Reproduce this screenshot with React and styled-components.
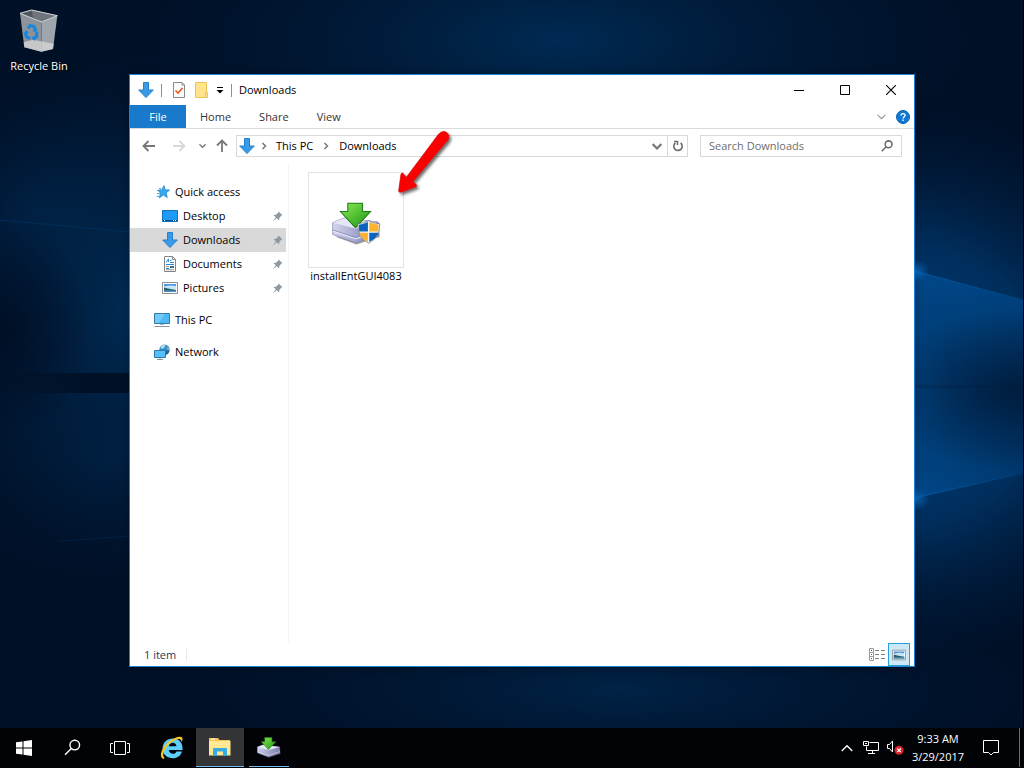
import React from 'react';
import styled, { createGlobalStyle } from 'styled-components';

const GlobalStyle = createGlobalStyle`
  *, *::before, *::after {
    box-sizing: border-box;
  }

  body {
    margin: 0;
    background: #000c1f;
    color: #000;
    font: 11px/16px 'Open Sans', 'Noto Sans', sans-serif;
  }

  button, input {
    margin: 0;
    padding: 0;
    border: 0;
    background: none;
    color: inherit;
    font: inherit;
  }

  a {
    color: inherit;
    text-decoration: none;
  }

  svg {
    display: block;
    flex: none;
  }
`;

const Screen = styled.div`
  display: flex;
  flex-direction: column;
  min-height: 100vh;
  position: relative;
  overflow: hidden;
`;

const WallpaperSvg = styled.svg`
  position: absolute;
  width: 100%;
  height: 100%;
`;

const Desktop = styled.main`
  flex: 1;
  position: relative;
`;

const DesktopShortcut = styled.button`
  display: flex;
  flex-direction: column;
  align-items: center;
  gap: 5px;
  width: 78px;
  padding-top: 9px;
  color: #fff;
  text-shadow: 1px 1px 2px #000;
  position: relative;
`;

const Window = styled.section`
  display: flex;
  flex-direction: column;
  position: absolute;
  inset: 74px 109px 61px 129px;
  background: #fff;
  border: 1px solid #1883d7;
  box-shadow: 0 1px 8px rgba(0, 0, 0, 0.3);
`;

const TitleBar = styled.header`
  display: flex;
  align-items: center;
  height: 30px;
  padding-left: 8px;
`;

const QuickTools = styled.div`
  display: flex;
  align-items: center;
  gap: 7px;
`;

const Divider = styled.span`
  width: 1px;
  height: ${(props) => (props.$faint ? '12px' : '13px')};
  background: ${(props) => (props.$faint ? '#e9e9e9' : '#8e8e8e')};
`;

const IconButton = styled.button`
  display: flex;
  align-items: center;
  justify-content: center;
  width: ${(props) => props.$width || 16}px;
  height: ${(props) => props.$height || 20}px;
`;

const WindowTitle = styled.h1`
  flex: 1;
  margin: 0;
  padding-left: 7px;
  font-size: 11px;
  font-weight: 400;
`;

const WindowControls = styled.div`
  display: flex;
`;

const Ribbon = styled.nav`
  display: flex;
  align-items: center;
  height: 24px;
  border-bottom: 1px solid #dadbdc;
`;

const RibbonTab = styled.button`
  height: 23px;
  padding: 0 14px;
  color: #333;
`;

const FileTab = styled(RibbonTab)`
  width: 56px;
  background: #1979ca;
  color: #fff;
`;

const Spacer = styled.div`
  flex: 1;
`;

const NavigationBar = styled.div`
  display: flex;
  align-items: center;
  height: 35px;
  padding: 0 12px 2px 7px;
`;

const HistoryButtons = styled.div`
  display: flex;
  align-items: center;
  width: 99px;
`;

const AddressBar = styled.div`
  display: flex;
  flex: 1;
  align-items: center;
  height: 22px;
  border: 1px solid #d9d9d9;
`;

const Crumb = styled.button`
  height: 20px;
  padding: 0 5px;
  line-height: 18px;
`;

const RefreshButton = styled(IconButton)`
  border-left: 1px solid #d9d9d9;
`;

const SearchBox = styled.label`
  display: flex;
  align-items: center;
  width: 202px;
  height: 22px;
  margin-left: 12px;
  padding: 0 8px;
  border: 1px solid #d9d9d9;
`;

const SearchInput = styled.input`
  flex: 1;
  min-width: 0;
  outline: 0;

  &::placeholder {
    color: #6d6d6d;
    opacity: 1;
  }
`;

const WindowBody = styled.div`
  display: flex;
  flex: 1;
  min-height: 0;
`;

const Sidebar = styled.nav`
  display: flex;
  flex-direction: column;
  width: 159px;
  padding: 16px 2px 0 0;
  border-right: 1px solid #f3f3f3;
`;

const SidebarLink = styled.a`
  display: flex;
  align-items: center;
  gap: 5px;
  height: 24px;
  padding: 0 3px 0 ${(props) => (props.$nested ? 32 : 24)}px;
  background: ${(props) => (props.$selected ? '#d9d9d9' : 'transparent')};
`;

const SidebarLabel = styled.span`
  flex: 1;
`;

const SidebarGroup = styled.div`
  margin-bottom: 8px;
`;

const FileArea = styled.div`
  flex: 1;
  padding: 8px 19px;
`;

const FileTile = styled.button`
  display: flex;
  flex-direction: column;
  align-items: center;
  width: 96px;
`;

const Thumbnail = styled.span`
  display: flex;
  align-items: center;
  justify-content: center;
  width: 96px;
  height: 96px;
  padding-top: 7px;
  border: 1px solid #e2e2e2;
`;

const StatusBar = styled.footer`
  display: flex;
  align-items: center;
  gap: 10px;
  height: 23px;
  padding: 0 4px 0 14px;
  color: #1e395b;
`;

const ViewButtons = styled.div`
  display: flex;
  margin-left: auto;
`;

const ActiveViewButton = styled(IconButton)`
  background: #cce8f6;
  border: 1px solid #26a0da;
`;

const PointerArrow = styled.svg`
  position: absolute;
  left: 267px;
  top: 53px;
`;

const Taskbar = styled.footer`
  display: flex;
  height: 40px;
  padding-bottom: 1px;
  background: #020307;
  color: #fff;
  position: relative;
`;

const TaskButton = styled.button`
  display: flex;
  align-items: center;
  justify-content: center;
  width: 48px;
`;

const AppButton = styled(TaskButton)`
  width: ${(props) => (props.$active ? 48 : 40)}px;
  margin-left: ${(props) => (props.$active ? 0 : 5)}px;
  background: ${(props) => (props.$active ? '#333537' : 'transparent')};
  border-bottom: 1px solid #76b9ed;
`;

const AppButtons = styled.div`
  display: flex;
  margin-left: 4px;
`;

const Tray = styled.div`
  display: flex;
  align-items: center;
  margin-left: auto;
`;

const Clock = styled.button`
  width: 62px;
  line-height: 18px;
  text-align: center;
`;

const ShowDesktop = styled.button`
  width: 5px;
  height: 39px;
  margin-left: 6px;
  border-left: 1px solid #6a6b6d;
`;

const Wallpaper = () => (
  <WallpaperSvg viewBox="0 0 1024 768" preserveAspectRatio="none" aria-hidden="true">
    <defs>
      <radialGradient id="rightGlow">
        <stop offset="0" stopColor="#0055a0" />
        <stop offset="0.5" stopColor="#004280" stopOpacity="0.8" />
        <stop offset="1" stopColor="#00234a" stopOpacity="0" />
      </radialGradient>
      <radialGradient id="softGlow">
        <stop offset="0" stopColor="#003362" stopOpacity="0.9" />
        <stop offset="1" stopColor="#001f40" stopOpacity="0" />
      </radialGradient>
      <radialGradient id="shade">
        <stop offset="0" stopColor="#000d22" stopOpacity="0.8" />
        <stop offset="1" stopColor="#000d22" stopOpacity="0" />
      </radialGradient>
      <radialGradient id="flare">
        <stop offset="0" stopColor="#1080e0" stopOpacity="0.8" />
        <stop offset="1" stopColor="#0060b0" stopOpacity="0" />
      </radialGradient>
      <linearGradient id="beam" x1="914" x2="1024" y1="0" y2="0" gradientUnits="userSpaceOnUse">
        <stop offset="0" stopColor="#0870c8" stopOpacity="0.6" />
        <stop offset="1" stopColor="#005a9e" stopOpacity="0.2" />
      </linearGradient>
      <linearGradient id="upperFill" x1="0.1" y1="0" x2="0" y2="1">
        <stop offset="0.1" stopColor="#005cac" stopOpacity="0.45" />
        <stop offset="1" stopColor="#00498a" stopOpacity="0" />
      </linearGradient>
      <linearGradient id="lowerFill" x1="0" y1="1" x2="0.3" y2="0">
        <stop offset="0.1" stopColor="#005cac" stopOpacity="0.45" />
        <stop offset="1" stopColor="#00498a" stopOpacity="0" />
      </linearGradient>
      <linearGradient id="band" x1="0" x2="1">
        <stop offset="0" stopColor="#000d20" stopOpacity="0" />
        <stop offset="0.5" stopColor="#000d20" stopOpacity="0.85" />
      </linearGradient>
    </defs>
    <rect width="1024" height="768" fill="#001027" />
    <ellipse cx="560" cy="40" rx="420" ry="160" fill="url(#softGlow)" opacity="0.85" />
    <ellipse cx="150" cy="310" rx="230" ry="260" fill="url(#softGlow)" />
    <ellipse cx="40" cy="210" rx="170" ry="140" fill="url(#softGlow)" opacity="0.4" />
    <ellipse cx="110" cy="460" rx="190" ry="130" fill="url(#softGlow)" opacity="0.3" />
    <ellipse cx="620" cy="690" rx="420" ry="100" fill="url(#softGlow)" opacity="0.6" />
    <ellipse cx="0" cy="330" rx="90" ry="110" fill="url(#shade)" />
    <ellipse cx="900" cy="385" rx="290" ry="280" fill="url(#rightGlow)" opacity="0.75" />
    <path d="M914 271 L1024 300 V386 H914 Z" fill="url(#upperFill)" />
    <path d="M914 498 L1024 473 V386 H914 Z" fill="url(#lowerFill)" />
    <path d="M914 271 L1024 300 M914 498 L1024 473" stroke="url(#beam)" />
    <ellipse cx="914" cy="271" rx="16" ry="12" fill="url(#flare)" />
    <ellipse cx="914" cy="499" rx="16" ry="12" fill="url(#flare)" />
    <ellipse cx="1010" cy="390" rx="130" ry="80" fill="url(#shade)" opacity="0.7" />
    <path d="M0 220 L130 232" stroke="#003b70" opacity="0.5" />
    <path d="M60 541 L130 536" stroke="#003260" opacity="0.4" />
    <path d="M914 385 H1024 V388 H914 Z" fill="#001c3c" opacity="0.25" />
    <path d="M0 373 H180 V393 H0 Z" fill="url(#band)" />
    <path d="M1023 0 H1024 V768 H1023 Z" fill="#000" />
  </WallpaperSvg>
);

const RecycleBinIcon = () => (
  <svg width="40" height="44" viewBox="58 28 120 132">
    <path d="M61 41 L126 67 L125 156 L74 143 Z" fill="#8c939b" />
    <path d="M126 67 L173 48 L160 148 L125 156 Z" fill="#9fa5ad" />
    <path d="M61 41 L96 31 L173 48 L126 67 Z" fill="#50565f" />
    <path d="M96 31 L100 54 L126 67 L173 48 Z" fill="#6f757d" />
    <path d="M72 128 L100 120 L162 132 L160 148 L125 156 L74 143 Z" fill="#d3d4d4" opacity="0.8" />
    <path d="M61 41 L96 31 L173 48 L126 67 Z" fill="none" stroke="#d5d8dc" strokeWidth="3" />
    <path
      d="M85 86 L91 78 L102 80 L107 90 M111 96 L111 112 L101 118 M91 117 L80 111 L77 98"
      fill="none"
      stroke="#1686df"
      strokeWidth="9"
    />
    <path d="M112 84 L110 99 L98 93 Z M105 107 L95 115 L104 125 Z M73 101 L80 90 L88 101 Z" fill="#1686df" />
  </svg>
);

const DownArrowIcon = () => (
  <svg width="16" height="16" viewBox="0 0 16 16">
    <path d="M5.5 0.5 H10.5 V8 H15.3 L8 15.6 L0.7 8 H5.5 Z" fill="#3a9ae8" stroke="#2581cb" />
  </svg>
);

const PropertiesIcon = () => (
  <svg width="16" height="16" viewBox="0 0 16 16">
    <path d="M2.5 0.5 H11 L13.5 3 V15.5 H2.5 Z" fill="#fafafa" stroke="#8a8a8a" />
    <path d="M11 0.5 V3 H13.5" fill="none" stroke="#8a8a8a" />
    <path d="M4.5 8.5 L7 11 L11.5 6" fill="none" stroke="#eb5a1e" strokeWidth="1.6" />
  </svg>
);

const FolderIcon = () => (
  <svg width="16" height="16" viewBox="0 0 16 16">
    <path d="M1.5 0.5 H12.5 V10 H13.5 V15.5 H1.5 Z" fill="#ffe48d" stroke="#eac55a" />
    <path d="M11.5 10 V15" stroke="#eac55a" />
  </svg>
);

const CustomizeIcon = () => (
  <svg width="8" height="8" viewBox="0 0 8 8">
    <path d="M1 1.5 H7" stroke="#000" />
    <path d="M0.5 4 H7.5 L4 7.5 Z" fill="#000" />
  </svg>
);

const Chevron = ({ direction = 'down', color = '#777', size = 8, weight = 1.5 }) => {
  const paths = {
    down: 'M0.5 2.5 L4 6 L7.5 2.5',
    right: 'M2.5 1 L5.5 4 L2.5 7',
    up: 'M0.5 6 L4 2.5 L7.5 6',
  };
  return (
    <svg width={size} height={size} viewBox="0 0 8 8">
      <path d={paths[direction]} fill="none" stroke={color} strokeWidth={weight} />
    </svg>
  );
};

const HistoryArrow = ({ angle = 0, color = '#777' }) => (
  <svg width="14" height="14" viewBox="0 0 14 14">
    <path
      d="M1.5 7 H13 M6.5 2 L1.5 7 L6.5 12"
      fill="none"
      stroke={color}
      strokeWidth="1.8"
      transform={`rotate(${angle} 7 7)`}
    />
  </svg>
);

const HelpIcon = () => (
  <svg width="14" height="14" viewBox="0 0 14 14">
    <circle cx="7" cy="7" r="6.5" fill="#0e78d4" stroke="#0864b4" />
    <path
      d="M5 5.4 C5 3 9.1 3 9.1 5.3 C9.1 6.8 7.1 6.8 7.1 8.6 M7.1 9.6 V11"
      fill="none"
      stroke="#fff"
      strokeWidth="1.4"
    />
  </svg>
);

const RefreshIcon = () => (
  <svg width="12" height="12" viewBox="0 0 12 12">
    <path d="M3.4 3 A4.2 4.2 0 1 0 8.6 3" fill="none" stroke="#6d6d6d" strokeWidth="1.6" />
    <path d="M2 1.5 H5.5 V5" fill="none" stroke="#6d6d6d" strokeWidth="1.5" />
  </svg>
);

const SearchIcon = ({ size = 12, color = '#6d6d6d', weight = 1.6 }) => (
  <svg width={size} height={size} viewBox="0 0 12 12">
    <circle cx="7.6" cy="4.3" r="3.4" fill="none" stroke={color} strokeWidth={weight} />
    <path d="M5.2 6.7 L0.7 11.2" stroke={color} strokeWidth={weight} />
  </svg>
);

const PinIcon = () => (
  <svg width="11" height="11" viewBox="0 0 11 11">
    <path
      d="M6.5 0.5 L10.5 4.2 L9.2 4.8 L7.3 7 L7.2 9.4 L4.7 7.2 L0.5 10.8 L3.8 6.3 L1.4 4 L4 3.8 L6.2 1.8 Z"
      fill="#8e9aa3"
    />
  </svg>
);

const StarIcon = () => (
  <svg width="16" height="16" viewBox="0 0 16 16">
    <path
      d="M10 1.5 L11.2 5.8 L15.6 6 L12.2 8.9 L13.3 13.6 L9.4 11 L5.2 14 L6.5 9.1 L3.8 6.2 L7.8 5.8 Z"
      fill="#34a9ee"
      stroke="#1a80c8"
      strokeWidth="0.7"
    />
    <path d="M5 4.5 H7 M3 6.5 H4 M3 9.5 H6 M2.6 12.3 H5" stroke="#4db1ec" />
  </svg>
);

const DesktopIcon = () => (
  <svg width="16" height="16" viewBox="0 0 16 16">
    <path d="M0.5 2.5 H15.5 V13.5 H0.5 Z" fill="#1e9cf5" stroke="#0f72bd" />
    <path d="M1 12.5 H15" stroke="#084f8c" />
    <path d="M2 12.5 H3 M11 12.5 H12 M13 12.5 H14" stroke="#fff" />
  </svg>
);

const DocumentIcon = () => (
  <svg width="16" height="16" viewBox="0 0 16 16">
    <path d="M2.5 0.5 H10.5 L13.5 3.5 V15.5 H2.5 Z" fill="#fff" stroke="#858585" />
    <path d="M10.5 0.5 V3.5 H13.5" fill="none" stroke="#858585" />
    <path d="M4 6.5 L6.5 2.8 V6 M8 4.5 H9.5 M4 8.5 H12 M8 6.5 H12 M4 12.5 H7" fill="none" stroke="#2a8bd4" />
    <path d="M4 10.5 H7 M4 13.8 H12" stroke="#777" strokeWidth="0.8" />
    <path d="M8 10 H12 V12 H8 Z" fill="#3c7188" />
  </svg>
);

const PictureIcon = ({ size = 16 }) => (
  <svg width={size} height={size} viewBox="0 0 16 16">
    <path d="M0.5 2.5 H15.5 V13.5 H0.5 Z" fill="#fff" stroke="#8f8f8f" />
    <path d="M2 4 H14 V12 H2 Z" fill="#c8e6f6" />
    <path d="M2 4 H14 V6 L8 5.5 L2 6.5 Z" fill="#5397df" />
    <path d="M2 7.5 L6 8.5 L14 10 V12 H2 Z" fill="#2c5f66" />
    <path d="M2 10.5 L14 10.5 V12 H2 Z" fill="#4b93c8" />
  </svg>
);

const ComputerIcon = () => (
  <svg width="16" height="16" viewBox="0 0 16 16">
    <path d="M0.5 1.5 H15.5 V11.5 H0.5 Z" fill="#4cb8f4" stroke="#347ba6" />
    <path d="M1 2 H11 L5 11 H1 Z" fill="#8bd5fa" opacity="0.6" />
    <path d="M6 12.5 H10" stroke="#a6b5be" />
    <path d="M0.5 14.5 H15.5" stroke="#8498a5" />
  </svg>
);

const NetworkIcon = () => (
  <svg width="16" height="16" viewBox="0 0 16 16">
    <circle cx="10.5" cy="5.6" r="5.2" fill="#3a8fc4" />
    <path d="M6.6 2.5 Q9 0.6 11.5 1.2 L10 4 L7.5 5 Z M13 3 L15 5 L14 6 Z" fill="#b4dcf0" />
    <path d="M12 6.5 H15.5 Q15 10 12 10.7 Z" fill="#24648f" />
    <path d="M0.5 6.5 H11.5 V13.5 H0.5 Z" fill="#56c0fa" stroke="#2b78ad" />
    <path d="M3 15.5 H9 M6 14 V15" stroke="#8798a3" />
  </svg>
);

const DetailsIcon = () => (
  <svg width="16" height="14" viewBox="0 0 16 14">
    <path d="M0.5 0.5 H4.5 V12.5 H0.5 Z M0.5 4.5 H4.5 M0.5 8.5 H4.5" fill="#fff" stroke="#9a9a9a" />
    <path d="M2 2.5 H3 M2 6.5 H3 M2 10.5 H3" stroke="#555" />
    <path d="M6 2.5 H10 M12 2.5 H16 M6 6.5 H10 M12 6.5 H16 M6 10.5 H10 M12 10.5 H16" stroke="#808080" />
  </svg>
);

const InstallerIcon = ({ width, height, shield }) => (
  <svg width={width} height={height} viewBox="95 247 146 127">
    <defs>
      <linearGradient id="greenArrow" x1="0" x2="1" y2="1">
        <stop offset="0" stopColor="#8bea56" />
        <stop offset="1" stopColor="#1a9410" />
      </linearGradient>
      <linearGradient id="driveSide" x2="1">
        <stop offset="0" stopColor="#d3d5ee" />
        <stop offset="0.5" stopColor="#a3a6cc" />
        <stop offset="1" stopColor="#7d80a4" />
      </linearGradient>
    </defs>
    <path d="M105 350 L168 373 L238 351 L232 342 Z" fill="#444" opacity="0.5" />
    <path
      d="M97 308 L131 294 L232 306 L236 346 L165 368 L97 343 Z"
      fill="url(#driveSide)"
      stroke="#7c80aa"
      strokeWidth="2"
    />
    <path d="M98 308 L131 295 L231 307 L166 326 Z" fill="#e6e7f6" />
    <path d="M98 333 L165 356 L235 335" fill="none" stroke="#eef" strokeWidth="3" />
    <path d="M98 330 L165 352 L235 331" fill="none" stroke="#7a7ea8" strokeWidth="2" />
    <path
      d="M142 250 H186 V275 H210 L165 323 L120 275 H142 Z"
      fill="url(#greenArrow)"
      stroke="#1c7d12"
      strokeWidth="3"
    />
    {shield && (
      <>
        <path
          d="M172 311 Q191 310 204 302 Q217 310 237 311 Q239 352 204 369 Q170 352 172 311 Z"
          fill="#f5f8fc"
          stroke="#566575"
          strokeWidth="2"
        />
        <path d="M175 314 Q190 312 202 306 V334 H176 Z M206 338 H233 Q228 355 206 365 Z" fill="#0c63bc" />
        <path d="M206 306 Q219 313 234 314 L233 334 H206 Z M177 338 H202 V365 Q181 356 177 338 Z" fill="#fcb330" />
      </>
    )}
  </svg>
);

const WindowsIcon = () => (
  <svg width="16" height="16" viewBox="0 0 16 16" fill="#fff">
    <path d="M0 2.3 L6.5 1.4 V7.5 H0 Z M7.5 1.2 L16 0 V7.5 H7.5 Z M0 8.5 H6.5 V14.6 L0 13.7 Z M7.5 8.5 H16 V16 L7.5 14.8 Z" />
  </svg>
);

const TaskViewIcon = () => (
  <svg width="20" height="14" viewBox="0 0 20 14">
    <path
      d="M4.5 0.5 H15.5 V13.5 H4.5 Z M3 2.5 H0.5 V11.5 H3 M17 2.5 H19.5 V11.5 H17"
      fill="none"
      stroke="#fff"
    />
  </svg>
);

const ExplorerBrowserIcon = () => (
  <svg width="24" height="24" viewBox="0 0 24 24">
    <path
      d="M22 15.5 C20.5 20 17 22.3 13 22.3 C7 22.3 2.6 18.3 2.6 12.5 C2.6 6.5 7 2.4 13 2.4 C19.2 2.4 23 7 22.6 14 H8.8 C9.2 16.6 11 17.8 13 17.8 C14.8 17.8 15.8 17 16.4 15.5 Z M8.9 10.2 H16.5 C16.2 8 14.8 6.8 12.8 6.8 C10.8 6.8 9.3 8 8.9 10.2 Z"
      fill="#5dd0fa"
      fillRule="evenodd"
    />
    <path
      d="M4 23 C-1.5 22.5 0.5 13 8 6.5 C14 1 21.5 -0.8 22.4 2.2 C22.8 3.6 22.3 5 21.4 6.3 C21.8 2.5 18 1.8 12.5 5.6 C5.5 10.4 0.8 19.6 4.6 21.5 Z"
      fill="#f6c51f"
    />
  </svg>
);

const FileExplorerIcon = () => (
  <svg width="22" height="20" viewBox="0 0 22 20">
    <path d="M0 1 H9 L10.5 3 H21 V18 H0 Z" fill="#f5c451" />
    <path d="M0 4 H21.5 V18.5 H0 Z" fill="#ffe794" />
    <path d="M2 2.2 H6" stroke="#fff" />
    <path d="M4 19 V12 Q4 11 5 11 H17 Q18 11 18 12 V19 H14 V14.5 H8 V19 Z" fill="#36abe2" />
  </svg>
);

const TrayNetworkIcon = () => (
  <svg width="16" height="14" viewBox="0 0 16 14">
    <path
      d="M6.5 1.5 H15.5 V9.5 H3.5 V5.5 M9.5 10 V12.5 M5 12.5 H12 M0.5 0.5 H5.5 V4.5 H0.5 Z M2 2.5 H4"
      fill="none"
      stroke="#fff"
    />
  </svg>
);

const TrayVolumeIcon = () => (
  <svg width="17" height="15" viewBox="0 0 17 15">
    <path d="M0.5 4.5 H2.5 L5.5 1 V12 L2.5 8.5 H0.5 Z" fill="none" stroke="#fff" />
    <circle cx="12" cy="10.3" r="4.5" fill="#dc2229" />
    <path d="M10.2 8.5 L13.8 12.1 M13.8 8.5 L10.2 12.1" stroke="#fff" strokeWidth="1.3" />
  </svg>
);

const ActionCenterIcon = () => (
  <svg width="16" height="16" viewBox="0 0 16 16">
    <path d="M0.5 0.5 H15.5 V12.5 H10.5 L8 15 L5.5 12.5 H0.5 Z" fill="none" stroke="#fff" />
  </svg>
);

const quickAccess = [
  { label: 'Desktop', Icon: DesktopIcon },
  { label: 'Downloads', Icon: DownArrowIcon, selected: true },
  { label: 'Documents', Icon: DocumentIcon },
  { label: 'Pictures', Icon: PictureIcon },
];

const NavigationPane = () => (
  <Sidebar aria-label="Folders">
    <SidebarGroup>
      <SidebarLink href="#quick-access">
        <StarIcon />
        <SidebarLabel>Quick access</SidebarLabel>
      </SidebarLink>
      {quickAccess.map(({ label, Icon, selected }) => (
        <SidebarLink key={label} href={`#${label.toLowerCase()}`} $nested $selected={selected}>
          <Icon />
          <SidebarLabel>{label}</SidebarLabel>
          <PinIcon />
        </SidebarLink>
      ))}
    </SidebarGroup>
    <SidebarGroup>
      <SidebarLink href="#this-pc">
        <ComputerIcon />
        <SidebarLabel>This PC</SidebarLabel>
      </SidebarLink>
    </SidebarGroup>
    <SidebarLink href="#network">
      <NetworkIcon />
      <SidebarLabel>Network</SidebarLabel>
    </SidebarLink>
  </Sidebar>
);

const ExplorerWindow = () => (
  <Window aria-label="Downloads">
    <TitleBar>
      <QuickTools>
        <DownArrowIcon />
        <Divider />
        <IconButton $width={20} aria-label="Properties">
          <PropertiesIcon />
        </IconButton>
        <IconButton $width={12} aria-label="New folder">
          <FolderIcon />
        </IconButton>
        <IconButton $width={9} aria-label="Customize toolbar">
          <CustomizeIcon />
        </IconButton>
        <Divider />
      </QuickTools>
      <WindowTitle>Downloads</WindowTitle>
      <WindowControls>
        <IconButton $width={46} $height={30} aria-label="Minimize">
          <svg width="10" height="10" viewBox="0 0 10 10">
            <path d="M0 5.5 H10" stroke="#000" />
          </svg>
        </IconButton>
        <IconButton $width={46} $height={30} aria-label="Maximize">
          <svg width="10" height="10" viewBox="0 0 10 10">
            <path d="M0.5 0.5 H9.5 V9.5 H0.5 Z" fill="none" stroke="#000" />
          </svg>
        </IconButton>
        <IconButton $width={46} $height={30} aria-label="Close">
          <svg width="10" height="10" viewBox="0 0 10 10">
            <path d="M0 0 L10 10 M10 0 L0 10" stroke="#000" strokeWidth="1.1" />
          </svg>
        </IconButton>
      </WindowControls>
    </TitleBar>
    <Ribbon>
      <FileTab>File</FileTab>
      <RibbonTab>Home</RibbonTab>
      <RibbonTab>Share</RibbonTab>
      <RibbonTab>View</RibbonTab>
      <Spacer />
      <IconButton $width={22} aria-label="Expand the ribbon">
        <Chevron size={9} color="#9a9a9a" weight={1} />
      </IconButton>
      <IconButton $width={22} aria-label="Help">
        <HelpIcon />
      </IconButton>
    </Ribbon>
    <NavigationBar>
      <HistoryButtons>
        <IconButton $width={24} aria-label="Back">
          <HistoryArrow />
        </IconButton>
        <IconButton $width={36} aria-label="Forward">
          <HistoryArrow angle={180} color="#d8d8d8" />
        </IconButton>
        <IconButton $width={12} aria-label="Recent locations">
          <Chevron size={7} />
        </IconButton>
        <IconButton $width={28} aria-label="Up">
          <HistoryArrow angle={90} />
        </IconButton>
      </HistoryButtons>
      <AddressBar>
        <IconButton $width={20} aria-label="Location">
          <DownArrowIcon />
        </IconButton>
        <IconButton $width={14} aria-label="Show folders">
          <Chevron direction="right" />
        </IconButton>
        <Crumb>This PC</Crumb>
        <IconButton $width={16} aria-label="Show folders in This PC">
          <Chevron direction="right" />
        </IconButton>
        <Crumb>Downloads</Crumb>
        <Spacer />
        <IconButton $width={20} aria-label="Previous locations">
          <Chevron size={10} weight={1.8} />
        </IconButton>
        <RefreshButton $width={20} aria-label="Refresh">
          <RefreshIcon />
        </RefreshButton>
      </AddressBar>
      <SearchBox>
        <SearchInput type="text" placeholder="Search Downloads" aria-label="Search Downloads" />
        <SearchIcon />
      </SearchBox>
    </NavigationBar>
    <WindowBody>
      <NavigationPane />
      <FileArea>
        <FileTile>
          <Thumbnail>
            <InstallerIcon width={49} height={43} shield />
          </Thumbnail>
          installEntGUI4083
        </FileTile>
      </FileArea>
    </WindowBody>
    <StatusBar>
      <span>1 item</span>
      <Divider $faint />
      <ViewButtons>
        <IconButton $width={22} $height={23} aria-label="Details view">
          <DetailsIcon />
        </IconButton>
        <ActiveViewButton $width={22} $height={23} aria-label="Large icons view">
          <PictureIcon size={14} />
        </ActiveViewButton>
      </ViewButtons>
    </StatusBar>
    <PointerArrow width="58" height="74" viewBox="291 24 174 222" aria-hidden="true">
      <defs>
        <filter id="arrowShadow" x="-20%" y="-20%" width="150%" height="150%">
          <feDropShadow dx="6" dy="7" stdDeviation="4" floodOpacity="0.6" />
        </filter>
      </defs>
      <path
        d="M296 212 L303 162 Q307 155 313 164 L319 172 L416 42 Q428 29 441 38 Q451 48 443 60 L338 185 L347 192 Q354 198 345 201 L301 217 Q296 217 296 212 Z"
        fill="#fb0404"
        stroke="#d40000"
        strokeWidth="2"
        filter="url(#arrowShadow)"
      />
    </PointerArrow>
  </Window>
);

const SystemTaskbar = () => (
  <Taskbar>
    <TaskButton aria-label="Start">
      <WindowsIcon />
    </TaskButton>
    <TaskButton aria-label="Search">
      <SearchIcon size={17} color="#fff" weight={1} />
    </TaskButton>
    <TaskButton aria-label="Task View">
      <TaskViewIcon />
    </TaskButton>
    <AppButtons>
      <TaskButton aria-label="Internet Explorer">
        <ExplorerBrowserIcon />
      </TaskButton>
      <AppButton $active aria-label="File Explorer">
        <FileExplorerIcon />
      </AppButton>
      <AppButton aria-label="Installer">
        <InstallerIcon width={24} height={21} />
      </AppButton>
    </AppButtons>
    <Tray>
      <IconButton $width={24} aria-label="Show hidden icons">
        <Chevron direction="up" color="#fff" size={12} weight={0.9} />
      </IconButton>
      <IconButton $width={24} aria-label="Network">
        <TrayNetworkIcon />
      </IconButton>
      <IconButton $width={24} aria-label="Volume">
        <TrayVolumeIcon />
      </IconButton>
      <Clock>
        9:33 AM
        <br />
        3/29/2017
      </Clock>
      <IconButton $width={44} aria-label="Action center">
        <ActionCenterIcon />
      </IconButton>
      <ShowDesktop aria-label="Show desktop" />
    </Tray>
  </Taskbar>
);

const App = () => {
  return (
    <Screen>
      <GlobalStyle />
      <Wallpaper />
      <Desktop>
        <DesktopShortcut>
          <RecycleBinIcon />
          Recycle Bin
        </DesktopShortcut>
        <ExplorerWindow />
      </Desktop>
      <SystemTaskbar />
    </Screen>
  );
};

export default App;
